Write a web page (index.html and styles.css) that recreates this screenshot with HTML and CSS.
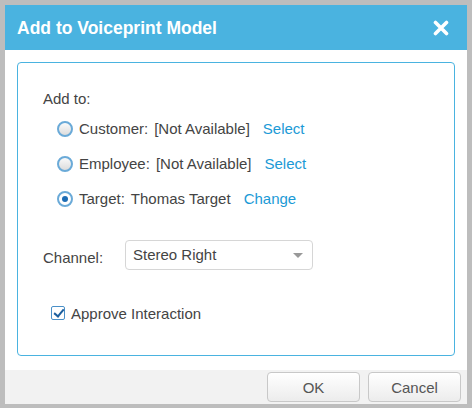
FILE: index.html
```html
<!DOCTYPE html>
<html lang="en">
<head>
    <meta charset="UTF-8">
    <title>Add to Voiceprint Model</title>
    <link rel="stylesheet" href="styles.css">
</head>
<body>
    <div class="dialog">
        <div class="dialog-header">
            <h1 class="dialog-title">Add to Voiceprint Model</h1>
            <button class="close-btn" type="button" title="Close">
                <svg width="16" height="16" viewBox="0 0 16 16">
                    <path d="M2.5 2.5 L13.5 13.5 M13.5 2.5 L2.5 13.5" stroke="#fff" stroke-width="3.6" stroke-linecap="round"/>
                </svg>
            </button>
        </div>

        <div class="dialog-body">
            <form class="panel" id="voiceprintForm">
                <div class="add-to">Add to:</div>

                <label class="option-row">
                    <input type="radio" name="addTo" value="customer" class="radio">
                    <span class="option-label">Customer:</span>
                    <span class="option-value">[Not Available]</span>
                    <a href="#" class="option-link">Select</a>
                </label>

                <label class="option-row">
                    <input type="radio" name="addTo" value="employee" class="radio">
                    <span class="option-label">Employee:</span>
                    <span class="option-value">[Not Available]</span>
                    <a href="#" class="option-link">Select</a>
                </label>

                <label class="option-row">
                    <input type="radio" name="addTo" value="target" class="radio" checked>
                    <span class="option-label">Target:</span>
                    <span class="option-value">Thomas Target</span>
                    <a href="#" class="option-link">Change</a>
                </label>

                <div class="channel-row">
                    <label for="channel" class="channel-label">Channel:</label>
                    <div class="select-wrap">
                        <select id="channel" class="channel-select">
                            <option>Stereo Left</option>
                            <option selected>Stereo Right</option>
                            <option>Mono</option>
                        </select>
                    </div>
                </div>

                <label class="approve-row">
                    <input type="checkbox" class="checkbox" checked>
                    <span>Approve Interaction</span>
                </label>
            </form>
        </div>

        <div class="dialog-footer">
            <button type="button" class="btn">OK</button>
            <button type="button" class="btn">Cancel</button>
        </div>
    </div>
</body>
</html>
```

FILE: styles.css
```css
/* Dialog styles */
html, body {
    margin: 0;
    height: 100%;
}

body {
    background-color: #bdbdbd;
    font-family: "Liberation Sans", Arial, sans-serif;
    font-size: 15px;
    color: #444444;
    padding: 5px 5px 4px 5px;
    box-sizing: border-box;
}

.dialog {
    width: 462px;
    height: 399px;
    background-color: #ffffff;
    display: flex;
    flex-direction: column;
}

/* Header bar */
.dialog-header {
    height: 45px;
    background-color: #4ab3e0;
    display: flex;
    align-items: center;
    justify-content: space-between;
    padding: 0 18px 0 12px;
}

.dialog-title {
    margin: 0;
    font-size: 17.5px;
    font-weight: bold;
    color: #ffffff;
    padding-top: 1px;
}

.close-btn {
    border: none;
    background: none;
    padding: 0;
    width: 16px;
    height: 16px;
    cursor: pointer;
    display: block;
}

.close-btn svg {
    display: block;
}

/* Body with the bordered panel */
.dialog-body {
    flex: 1;
    padding: 12px 12px 14px 12px;
}

.panel {
    margin: 0;
    height: 100%;
    box-sizing: border-box;
    border: 1px solid #4ab3e0;
    border-radius: 4px;
    padding: 27px 25px 0 25px;
}

.add-to {
    line-height: 18px;
    margin-bottom: 3px;
}

.option-row {
    display: flex;
    align-items: center;
    height: 35px;
    padding-left: 14px;
    cursor: pointer;
}

.radio {
    appearance: none;
    -webkit-appearance: none;
    width: 16px;
    height: 16px;
    margin: 0 6px 0 0;
    border: 2px solid #6aaad8;
    border-radius: 50%;
    background: linear-gradient(#fafafa, #dcdcdc);
    box-sizing: border-box;
    position: relative;
    flex: none;
}

.radio:checked {
    background: #ffffff;
}

.radio:checked::after {
    content: "";
    position: absolute;
    left: 3px;
    top: 3px;
    width: 6px;
    height: 6px;
    border-radius: 50%;
    background-color: #1d6db5;
}

.option-value {
    margin-left: 6px;
}

.option-link {
    margin-left: 13px;
    color: #1b9ad6;
    text-decoration: none;
}

/* Channel dropdown */
.channel-row {
    display: flex;
    align-items: center;
    margin-top: 24px;
    height: 30px;
}

.channel-label {
    width: 82px;
    padding-top: 5px;
}

.select-wrap {
    position: relative;
    width: 188px;
}

.select-wrap::after {
    content: "";
    position: absolute;
    right: 10px;
    top: 13px;
    border-left: 5px solid transparent;
    border-right: 5px solid transparent;
    border-top: 5px solid #999999;
    pointer-events: none;
}

.channel-select {
    appearance: none;
    -webkit-appearance: none;
    width: 100%;
    height: 30px;
    border: 1px solid #d6d6d6;
    border-radius: 4px;
    background-color: #ffffff;
    font-family: "Liberation Sans", Arial, sans-serif;
    font-size: 15px;
    color: #444444;
    padding: 0 0 2px 7px;
    display: block;
}

/* Approve checkbox */
.approve-row {
    display: flex;
    align-items: center;
    margin-top: 31px;
    height: 24px;
    padding-left: 8px;
    cursor: pointer;
}

.checkbox {
    appearance: none;
    -webkit-appearance: none;
    width: 14px;
    height: 14px;
    margin: 0 6px 0 0;
    border: 1px solid #4a90c8;
    border-radius: 2px;
    background: #ffffff;
    position: relative;
    flex: none;
}

.checkbox:checked::after {
    content: "";
    position: absolute;
    left: 3.5px;
    top: 0px;
    width: 4px;
    height: 8px;
    border-right: 2.5px solid #1d5f9e;
    border-bottom: 2.5px solid #1d5f9e;
    transform: rotate(40deg);
}

/* Footer buttons */
.dialog-footer {
    height: 34px;
    background-color: #f2f2f2;
    display: flex;
    justify-content: flex-end;
    gap: 8px;
    padding: 2px 6px 0 0;
    box-sizing: border-box;
}

.btn {
    width: 93px;
    height: 30px;
    border: 1px solid #c8c8c8;
    border-radius: 4px;
    background: linear-gradient(#ffffff, #ececec);
    font-family: "Liberation Sans", Arial, sans-serif;
    font-size: 15px;
    color: #555555;
    cursor: pointer;
}
```
